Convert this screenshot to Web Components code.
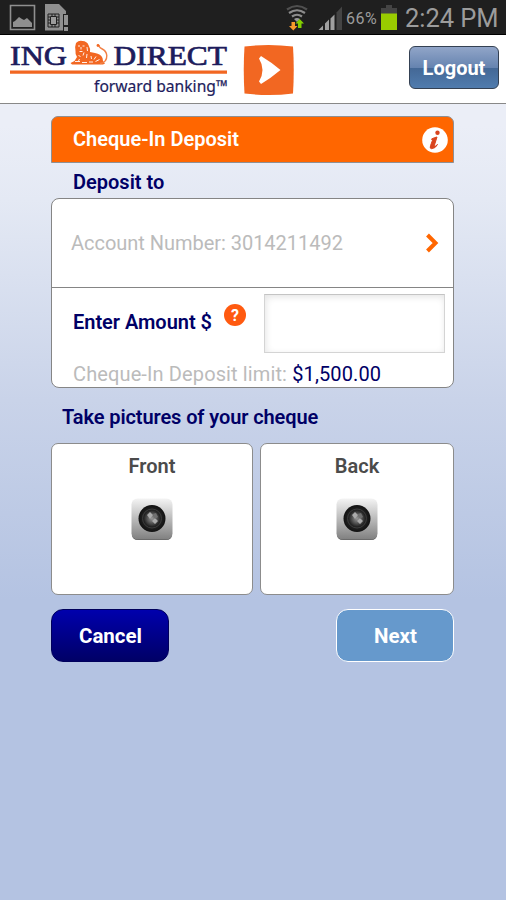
<!DOCTYPE html>
<html lang="en"><head><meta charset="utf-8"><title>Cheque-In Deposit</title>
<style>html,body{margin:0;height:100%;overflow:hidden}body{font-family:Roboto,"Liberation Sans",sans-serif}</style></head>
<body><deposit-app></deposit-app>
<script>
const define=(name,html)=>customElements.define(name,class extends HTMLElement{
  constructor(){super();this.attachShadow({mode:'open'}).innerHTML=html;}
});

define('status-bar',`<style>
:host{display:flex;box-sizing:border-box;height:35px;background:#1f1f1f;border-bottom:1px solid #000;color:#9c9c9c;padding-left:9px}
svg{display:block;flex:none}.gap{flex:1}
.pct{font-size:16px;line-height:37px;width:34px;letter-spacing:.5px;white-space:nowrap}
.time{font-size:25.5px;line-height:36px;width:101px;white-space:nowrap;letter-spacing:-.05px}
</style>
<svg width="62" height="34" viewBox="9 0 62 34"><path d="M10.500 5.500h24v24h-24z" fill="none" stroke="#8f8f8f" stroke-width="1.600"/><path d="M13 27v-5l2-1 4-4 3 2 2 1 3-2 4 4 1 1v4z" fill="#8f8f8f"/>
<path d="M45 4h14l7 7v4h-3v13l2 2.500h-20z" fill="#8f8f8f"/><path d="M48 14h11v13h-11z" fill="none" stroke="#1f1f1f"/><path d="M50.500 16.500h6v8h-6zM48 17h2M48 20h2M48 23h2M57 17h2M57 20h2M57 23h2M52 14v2M55 14v2M52 25v2M55 25v2" fill="#9c9c9c" stroke="#1f1f1f"/><path d="M63 14h5v17h-5z" fill="#1f1f1f"/><path d="M64 15h4v10h-4zM64 27h4v4h-4z" fill="#929292"/></svg>
<div class="gap"></div>
<svg width="60" height="34" viewBox="286 0 60 34"><g fill="none" stroke="#8c8c8c" stroke-width="2.200"><path d="M287 9.500q10-7 20 0" stroke="#505050"/><path d="M289 13q8-5.500 16 0M292 16.500q5-3.500 10 0"/></g><path d="M294 19q3-2 6 0l-3 3z" fill="#999"/><path d="M291.500 22h3.500v4h2.500l-4.200 4.500-4.300-4.500h2.500z" fill="#f79a2b"/><path d="M298 28v-4.500h-2.500l4.200-4.500 4.300 4.500h-2.500v4.500z" fill="#83d000"/>
<path d="M318.500 30l4.500-4.500V30zM325 23.500v6.500h4v-10.500zM330.500 18.500V30h4V14.500z" fill="#a0a0a0"/><path d="M336.500 12.500V30h5.500V6.500z" fill="#444"/></svg>
<div class="pct">66%</div>
<svg width="25" height="34" viewBox="380 0 25 34"><path d="M381 8h5V5h6v3h5v6h-16z" fill="#444"/><path d="M381 13.500h16V30h-16z" fill="#99cc00"/></svg>
<div class="time">2:24 PM</div>`);

define('bank-logo',`<style>:host{display:block}svg{display:block}</style>
<svg width="290" height="66" viewBox="8 36 290 66">
<g font-family="Liberation Serif,serif" font-size="28" fill="#1d1c5c" stroke="#1d1c5c" stroke-width=".7"><text x="10" y="64.500" textLength="57" lengthAdjust="spacingAndGlyphs">ING</text><text x="113.500" y="64.500" textLength="113.500" lengthAdjust="spacingAndGlyphs">DIRECT</text></g>
<path d="M10 70.500h217v3.200H10z" fill="#f26722"/>
<text x="94" y="92" font-family="Noto Sans,sans-serif" font-size="16.500" fill="#1d1c5c" stroke="#1d1c5c" stroke-width=".2" textLength="134" lengthAdjust="spacingAndGlyphs">forward banking™</text>
<path d="M76 43q3-3 6.500-2 4.500 .3 6 4 2 3.500 1.500 7l5 1q6 1 7.500 5l.5 3 2 2.500-2 1H72l-1.500-1.500 4-2 2.500-4q-2-3-1.500-6-1-4 .5-8z" fill="#f26722"/>
<path d="M100 63.500q7-1 6.800-8-.5-4.500-4.500-6.500-4-2-3-4" fill="none" stroke="#f28045" stroke-width="1.400"/><circle cx="98" cy="45.500" r="1.400" fill="#f26722"/>
<path d="M78 46h2M82.500 46h2M81 47v2.500M79.500 51.500h3M78.500 55l2 2M84 52.500l-1 3M87 47l.5 4M87 54l-.5 4M91 56l.5 3M96 56.500l-2 3M99.500 59.500l-4 2M75 61.500h5M82 62.500h5M79.500 59l-1 2M89 62h4" fill="none" stroke="#fff" stroke-width=".9"/>
<path d="M244.500 46.500q24-3 48.500 0 1.500 23.500 0 47-24 3-48.500 0-1.500-23.500 0-47z" fill="#f26722"/>
<path d="M261 56q10 6 19.500 14-9.500 8-19.500 14l-2-2.500q7-11.500 0-23z" fill="#fff"/></svg>`);

define('app-header',`<style>:host{display:flex;justify-content:space-between;box-sizing:border-box;height:69px;background:#fff;border-bottom:1px solid #888;padding:1px 7px 0 8px}
button{box-sizing:border-box;margin:10px 0 0;width:90px;height:43px;border:1.500px solid #344153;border-radius:6px;background:linear-gradient(#91a5c8,#6684b0 50%,#446896 52%,#507cae);color:#fff;font:700 20px/40px Roboto;padding:0;letter-spacing:0}</style><slot></slot><button>Logout</button>`);

define('title-banner',`<style>:host{display:flex;justify-content:space-between;align-items:center;box-sizing:border-box;height:47px;background:#f60;border:1px solid #8e8f93;border-radius:7px 7px 0 0;padding:0 5px 0 21px;color:#fff;font:600 20px/45px Roboto}svg{display:block}</style><span><slot></slot></span>
<svg width="26" height="26" viewBox="0 0 26 26"><circle cx="13" cy="13" r="12.800" fill="#fff"/><circle cx="15.500" cy="5.800" r="2.200" fill="#d9441e"/><path d="M9.500 12q3-1.500 5.500-2l-3 9.500q1.500 0 3.500-2-2 4-6 4.200-2 0-1-3l2-5.500z" fill="#d9441e" stroke="#d9441e"/></svg>`);

define('account-panel',`<style>:host{display:block;box-sizing:border-box;height:190px;background:#fff;border:1px solid #858585;border-radius:8px;color:#bbb;font-size:20px;overflow:hidden}
.acct{display:flex;justify-content:space-between;align-items:center;height:88px;border-bottom:1px solid #858585;padding:0 13px 0 19px}
.t{letter-spacing:-.03px}
.amount{display:flex;height:66px;padding:6px 8px 0 21px;box-sizing:border-box}
label{font-weight:600;color:#006;line-height:57px;width:150px;letter-spacing:-.03px}
svg{display:block}.amount svg{margin-top:9px}
input{box-sizing:border-box;margin:0 0 0 auto;width:181px;height:59px;border:1px solid #d4d4d4;border-top-color:#c4c4c4;box-shadow:inset 1px 2px 7px #e4e4e4;background:#fff;padding:0}
.limit{padding-left:21px;line-height:41px;white-space:nowrap;letter-spacing:.12px}.limit b{font-weight:400;color:#006}</style>
<div class="acct"><span class="t">Account Number: 3014211492</span><svg width="15" height="20" viewBox="0 0 15 20"><path d="M2.500 2l8 8-8 8" stroke="#f60" stroke-width="4" fill="none"/></svg></div>
<div class="amount"><label>Enter Amount $</label><svg width="24" height="24" viewBox="0 0 24 24"><circle cx="12" cy="12" r="11" fill="#ff5a10"/><text x="12" y="17.500" text-anchor="middle" font-family="Roboto" font-weight="700" font-size="16" fill="#fff">?</text></svg><input aria-label="Amount"></div>
<div class="limit">Cheque-In Deposit limit: <b>$1,500.00</b></div>`);

define('photo-card',`<style>:host{display:flex;flex-direction:column;align-items:center;box-sizing:border-box;height:152px;background:#fff;border:1px solid #8c8c8c;border-radius:7px;color:#4b4b4b;font:600 20px/44px Roboto}svg{display:block;margin-top:10px}</style><span><slot></slot></span>
<svg width="42" height="43" viewBox="0 0 42 43"><defs><linearGradient id="g" x2="0" y2="1"><stop stop-color="#f4f4f4"/><stop offset="1" stop-color="#808080"/></linearGradient><radialGradient id="l"><stop stop-color="#999"/><stop offset=".35" stop-color="#555"/><stop offset=".6" stop-color="#242424"/><stop offset="1" stop-color="#111"/></radialGradient></defs><path d="M1 35v1q0 6 6 6h28q6 0 6-6v-1z" fill="#555"/><rect x=".5" y=".5" width="41" height="41" rx="6" fill="url(#g)"/><circle cx="21" cy="20.500" r="13.500" fill="url(#l)"/><circle cx="21" cy="20.500" r="9.500" fill="none" stroke="#3c3c3c"/><path d="M16 17l3-3 3 3-3 4zM21 23l3-3 3 3-3 3z" fill="#aaa"/><path d="M22 16l3-1 2 4-3 2z" fill="#707070"/></svg>`);

define('action-button',`<style>:host{display:block;box-sizing:border-box;width:118px;height:53px;border-radius:12px;text-align:center;color:#fff;font:700 20.500px/52px Roboto;background:linear-gradient(#0000ad,#000066);border:1px solid #00005c;padding-left:1px}
:host([secondary]){background:#69c;border:1.500px solid #fff}</style><slot></slot>`);

define('deposit-app',`<style>:host{display:block;height:900px;background:linear-gradient(#ebeef7 0,#ebeef7 125px,#e4e9f4 200px,#c9d3e9 400px,#b4c3e2 600px,#b4c3e2)}
main{padding:12px 52px 0 51px}h2{margin:0;color:#006;font:600 20px/38px Roboto;height:35px}
.cards{display:grid;grid-template-columns:202px 194px;gap:7px}.actions{display:flex;justify-content:space-between;margin-top:14px}
.to{padding-left:22px}.pics{padding-left:11px;height:55px;line-height:58px;letter-spacing:-.1px}</style>
<status-bar></status-bar><app-header><bank-logo></bank-logo></app-header>
<main><title-banner>Cheque-In Deposit</title-banner><h2 class="to">Deposit to</h2><account-panel></account-panel>
<h2 class="pics">Take pictures of your cheque</h2>
<div class="cards"><photo-card>Front</photo-card><photo-card>Back</photo-card></div>
<div class="actions"><action-button>Cancel</action-button><action-button secondary>Next</action-button></div></main>`);
</script></body></html>
